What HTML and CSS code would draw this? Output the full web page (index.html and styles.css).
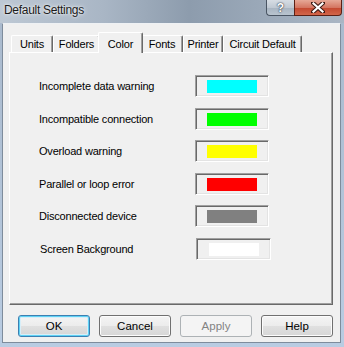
FILE: index.html
```html
<!DOCTYPE html>
<html lang="en">
<head>
    <meta charset="UTF-8">
    <meta name="viewport" content="width=device-width, initial-scale=1.0">
    <title>Default Settings</title>
    <link rel="stylesheet" href="styles.css">
</head>
<body>
    <div class="window">
        <!-- Title bar -->
        <header class="titlebar">
            <span class="title">Default Settings</span>
            <div class="caption-btns">
                <div class="cap-btn cap-help">?</div>
                <div class="cap-btn cap-close">
                    <svg width="14" height="11" viewBox="0 0 14 11">
                        <path d="M2 1 L12 10 M12 1 L2 10" stroke="#3b1a14" stroke-width="4.2" stroke-linecap="square"/>
                        <path d="M2.5 1.5 L11.5 9.5 M11.5 1.5 L2.5 9.5" stroke="#ffffff" stroke-width="2.2" stroke-linecap="square"/>
                    </svg>
                </div>
            </div>
        </header>

        <!-- Client area -->
        <main class="client">
            <nav class="tabs">
                <div class="tab tab-units">Units</div>
                <div class="tab tab-folders">Folders</div>
                <div class="tab tab-color active">Color</div>
                <div class="tab tab-fonts">Fonts</div>
                <div class="tab tab-printer">Printer</div>
                <div class="tab tab-circuit">Circuit Default</div>
            </nav>

            <section class="panel">
                <div class="color-list">
                    <span class="color-label">Incomplete data warning</span>
                    <div class="color-box"><span class="swatch swatch-cyan"></span></div>

                    <span class="color-label">Incompatible connection</span>
                    <div class="color-box"><span class="swatch swatch-green"></span></div>

                    <span class="color-label">Overload warning</span>
                    <div class="color-box"><span class="swatch swatch-yellow"></span></div>

                    <span class="color-label">Parallel or loop error</span>
                    <div class="color-box"><span class="swatch swatch-red"></span></div>

                    <span class="color-label">Disconnected device</span>
                    <div class="color-box"><span class="swatch swatch-gray"></span></div>

                    <span class="color-label shifted">Screen Background</span>
                    <div class="color-box shifted"><span class="swatch swatch-white"></span></div>
                </div>
            </section>

            <!-- Dialog buttons -->
            <div class="dialog-btns">
                <button class="btn btn-default">OK</button>
                <button class="btn">Cancel</button>
                <button class="btn" disabled>Apply</button>
                <button class="btn">Help</button>
            </div>
        </main>
    </div>
</body>
</html>
```

FILE: styles.css
```css
* {
    margin: 0;
    padding: 0;
    box-sizing: border-box;
}

body {
    font-family: "Liberation Sans", Arial, sans-serif;
    font-size: 11px;
    color: #000000;
    background-color: #b7cade;
}

/* Window frame */
.window {
    width: 344px;
    height: 347px;
    display: flex;
    flex-direction: column;
    background:
        linear-gradient(to right, #bdc8d4 0%, #a9b6c5 30%, #8d9cad 55%, #9aa8b8 75%, #aab6c4 100%) top / 100% 23px no-repeat,
        linear-gradient(to bottom, #a9b9cc 0%, #b9cce2 100%);
}

/* Title bar */
.titlebar {
    height: 23px;
    flex: none;
    display: flex;
    justify-content: space-between;
    align-items: flex-start;
}

.title {
    font-size: 12px;
    letter-spacing: -0.3px;
    color: #1a1a1a;
    padding: 3px 0 0 4px;
    text-shadow: 0 0 5px rgba(255, 255, 255, 0.9), 0 0 2px rgba(255, 255, 255, 0.8);
}

.caption-btns {
    display: flex;
    margin-right: 2px;
}

.cap-btn {
    height: 16px;
    display: flex;
    align-items: center;
    justify-content: center;
    border: 1px solid #4a5563;
    border-top: none;
}

.cap-help {
    width: 28px;
    border-radius: 0 0 0 4px;
    border-right: none;
    background: linear-gradient(to bottom, #d7dde4 0%, #c0c9d3 50%, #a8b4c1 51%, #b9c4cf 100%);
    color: #ffffff;
    font-weight: bold;
    font-size: 12px;
    text-shadow: 0 0 2px #2c3440, 0 0 1px #2c3440;
}

.cap-close {
    width: 48px;
    border-color: #5c2015;
    border-radius: 0 0 4px 0;
    background: linear-gradient(to bottom, #e6a897 0%, #d47662 50%, #c3472f 51%, #d2664a 100%);
}

/* Client */
.client {
    flex: 1;
    margin: 0 3px 4px 2px;
    background-color: #f0f0f0;
    border: 1px solid #7e8c9c;
    border-top-color: #eef1f4;
    padding: 8px 7px 0 6px;
    display: flex;
    flex-direction: column;
}

/* Tabs */
.tabs {
    height: 20px;
    display: flex;
    align-items: flex-end;
    padding-left: 2px;
    position: relative;
    z-index: 2;
}

.tab {
    height: 17px;
    text-align: center;
    line-height: 16px;
    letter-spacing: -0.2px;
    background-color: #f0f0f0;
    border-top: 1px solid #ffffff;
    border-left: 1px solid #ffffff;
    border-right: 1px solid #696969;
    box-shadow: inset -1px 0 0 #a0a0a0;
    border-radius: 2px 2px 0 0;
}

.tab-units { width: 42px; }
.tab-folders { width: 47px; }
.tab-color { width: 41px; }
.tab-fonts { width: 42px; }
.tab-printer { width: 40px; }
.tab-circuit { width: 79px; }

.tab.active {
    width: 45px;
    height: 21px;
    margin: 0 -2px -1px;
    line-height: 22px;
    position: relative;
    z-index: 3;
}

/* Panel */
.panel {
    flex: none;
    height: 253px;
    border: 1px solid;
    border-color: #ffffff #696969 #696969 #ffffff;
    box-shadow: inset -1px -1px 0 #a0a0a0;
    padding: 22px 0 0 29px;
}

.color-list {
    display: grid;
    grid-template-columns: 156px 74px;
    grid-auto-rows: 22px;
    row-gap: 10.6px;
    align-items: center;
}

.color-label {
    letter-spacing: -0.2px;
}

.color-label.shifted {
    padding-left: 1px;
}

.color-box {
    width: 74px;
    height: 22px;
    border: 1px solid;
    border-color: #a0a0a0 #ffffff #ffffff #a0a0a0;
    box-shadow: inset 1px 1px 0 #696969, inset -1px -1px 0 #e3e3e3;
    display: flex;
    align-items: center;
    justify-content: center;
    padding-top: 1px;
}

.color-box.shifted {
    margin-left: 1px;
    width: 75px;
}

.swatch {
    display: block;
    width: 50px;
    height: 13px;
}

.swatch-cyan { background-color: #00ffff; }
.swatch-green { background-color: #00ff00; }
.swatch-yellow { background-color: #ffff00; }
.swatch-red { background-color: #ff0000; }
.swatch-gray { background-color: #808080; }
.swatch-white { background-color: #ffffff; }

/* Dialog buttons */
.dialog-btns {
    display: flex;
    justify-content: flex-end;
    gap: 9px;
    margin-top: 10px;
}

.btn {
    width: 72px;
    height: 22px;
    font-family: inherit;
    font-size: 11.5px;
    color: #000000;
    border: 1px solid #707070;
    border-radius: 3px;
    background: linear-gradient(to bottom, #f4f4f4 0%, #ececec 50%, #e0e0e0 51%, #d6d6d6 100%);
    box-shadow: inset 0 0 0 1px #fcfcfc;
}

.btn-default {
    border-color: #3c7fb1;
    box-shadow: inset 0 0 0 1px #5fd2f5, inset 0 0 0 2px #d8eef8;
}

.btn:disabled {
    color: #838383;
    border-color: #adb2b5;
    background: #f4f4f4;
    box-shadow: none;
}
```
